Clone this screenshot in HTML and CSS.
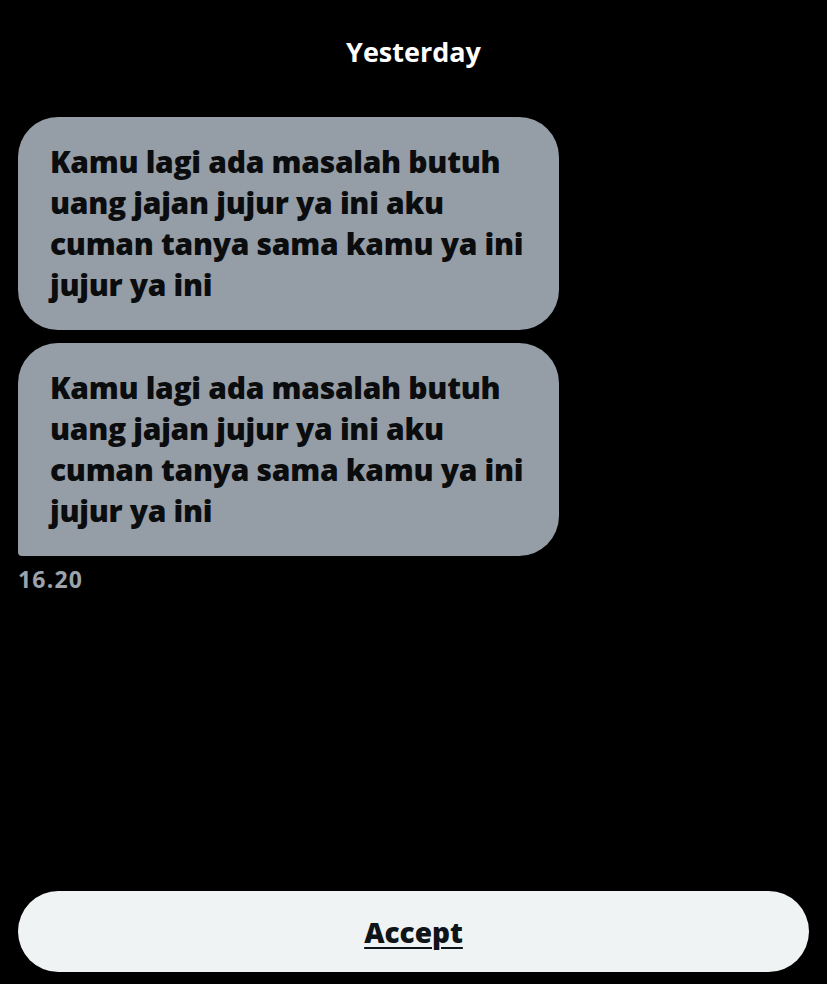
FILE: index.html
```html
<!DOCTYPE html>
<html>
<head>
<meta charset="utf-8">
<link rel="stylesheet" href="styles.css">
</head>
<body>
<div class="screen">
  <div class="day">Yesterday</div>
  <div class="messages">
    <div class="bubble">Kamu lagi ada masalah butuh uang jajan jujur ya ini aku cuman tanya sama kamu ya ini jujur ya ini</div>
    <div class="bubble last">Kamu lagi ada masalah butuh uang jajan jujur ya ini aku cuman tanya sama kamu ya ini jujur ya ini</div>
    <div class="time">16.20</div>
  </div>
  <div class="spacer"></div>
  <div class="accept"><span>Accept</span></div>
</div>
</body>
</html>
```

FILE: styles.css
```css
html, body {
  margin: 0;
  padding: 0;
  background: #000;
}
.screen {
  width: 827px;
  height: 984px;
  display: flex;
  flex-direction: column;
  font-family: "Open Sans", "Liberation Sans", sans-serif;
  box-sizing: border-box;
  padding: 0 18px 12px 18px;
}
.day {
  color: #fff;
  font-weight: 700;
  font-size: 27px;
  text-align: center;
  padding-top: 34px;
  line-height: 36px;
}
.messages {
  display: flex;
  flex-direction: column;
  gap: 13px;
  margin-top: 47px;
}
.bubble {
  width: 541px;
  box-sizing: border-box;
  background: #959da6;
  color: #0b0c0d;
  font-weight: 800;
  font-size: 30px;
  line-height: 41px;
  padding: 24px 29px 25px 32px;
  border-radius: 40px;
  letter-spacing: -0.3px;
}
.bubble.last {
  border-bottom-left-radius: 4px;
}
.time {
  margin-top: -6px;
  color: #9ba3ac;
  font-weight: 700;
  font-size: 23px;
  letter-spacing: 1.2px;
}
.spacer { flex: 1; }
.accept {
  height: 81px;
  background: #eff3f4;
  border-radius: 41px;
  display: flex;
  align-items: center;
  justify-content: center;
}
.accept span {
  color: #0f1419;
  font-weight: 800;
  font-size: 28px;
  text-decoration: underline;
  text-decoration-thickness: 2px;
  text-underline-offset: 4px;
}
```
